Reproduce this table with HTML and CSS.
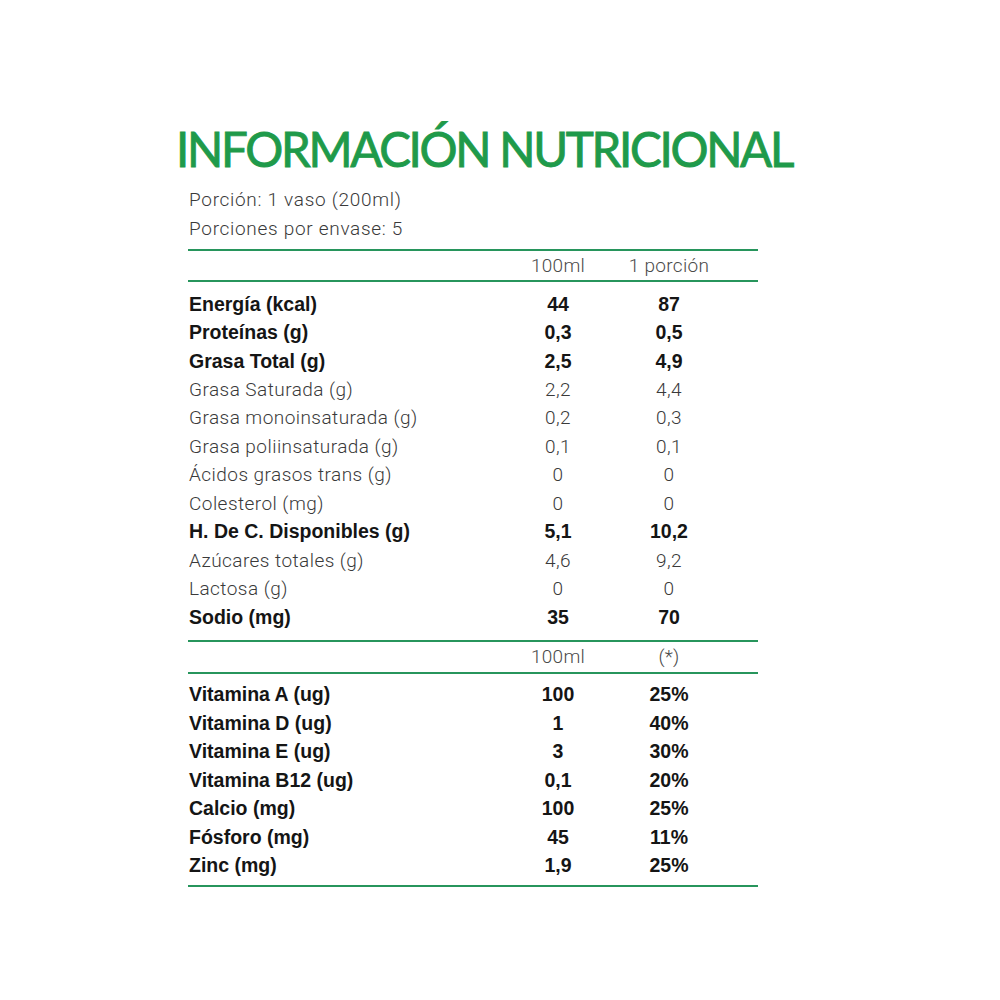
FILE: index.html
```html
<!DOCTYPE html>
<html lang="es">
<head>
<meta charset="utf-8">
<link rel="stylesheet" href="styles.css">
</head>
<body>
<main class="panel">
  <h1 class="title">INFORMACIÓN NUTRICIONAL</h1>
  <div class="meta">
    <p>Porción: 1 vaso (200ml)</p>
    <p>Porciones por envase: 5</p>
  </div>
  <div class="rule"></div>
  <div class="row head"><span></span><span class="v">100ml</span><span class="v">1 porción</span></div>
  <div class="rule"></div>
  <section class="block first">
    <div class="row b"><span>Energía (kcal)</span><span class="v">44</span><span class="v">87</span></div>
    <div class="row b"><span>Proteínas (g)</span><span class="v">0,3</span><span class="v">0,5</span></div>
    <div class="row b"><span>Grasa Total (g)</span><span class="v">2,5</span><span class="v">4,9</span></div>
    <div class="row"><span>Grasa Saturada (g)</span><span class="v">2,2</span><span class="v">4,4</span></div>
    <div class="row"><span>Grasa monoinsaturada (g)</span><span class="v">0,2</span><span class="v">0,3</span></div>
    <div class="row"><span>Grasa poliinsaturada (g)</span><span class="v">0,1</span><span class="v">0,1</span></div>
    <div class="row"><span>Ácidos grasos trans (g)</span><span class="v">0</span><span class="v">0</span></div>
    <div class="row"><span>Colesterol (mg)</span><span class="v">0</span><span class="v">0</span></div>
    <div class="row b"><span>H. De C. Disponibles (g)</span><span class="v">5,1</span><span class="v">10,2</span></div>
    <div class="row"><span>Azúcares totales (g)</span><span class="v">4,6</span><span class="v">9,2</span></div>
    <div class="row"><span>Lactosa (g)</span><span class="v">0</span><span class="v">0</span></div>
    <div class="row b"><span>Sodio (mg)</span><span class="v">35</span><span class="v">70</span></div>
  </section>
  <div class="rule"></div>
  <div class="row head head2"><span></span><span class="v">100ml</span><span class="v">(*)</span></div>
  <div class="rule"></div>
  <section class="block second">
    <div class="row b"><span>Vitamina A (ug)</span><span class="v">100</span><span class="v">25%</span></div>
    <div class="row b"><span>Vitamina D (ug)</span><span class="v">1</span><span class="v">40%</span></div>
    <div class="row b"><span>Vitamina E (ug)</span><span class="v">3</span><span class="v">30%</span></div>
    <div class="row b"><span>Vitamina B12 (ug)</span><span class="v">0,1</span><span class="v">20%</span></div>
    <div class="row b"><span>Calcio (mg)</span><span class="v">100</span><span class="v">25%</span></div>
    <div class="row b"><span>Fósforo (mg)</span><span class="v">45</span><span class="v">11%</span></div>
    <div class="row b"><span>Zinc (mg)</span><span class="v">1,9</span><span class="v">25%</span></div>
  </section>
  <div class="rule"></div>
</main>
</body>
</html>
```
FILE: styles.css
```css
html, body {
  margin: 0;
  padding: 0;
  background: #ffffff;
}
body {
  width: 1000px;
  height: 1000px;
}
.panel {
  width: 570px;
  margin-left: 188px;
  padding-top: 120px;
  font-family: Roboto, "Liberation Sans", sans-serif;
  color: #1b1b1b;
}
.title {
  margin: 0 0 0 -12px;
  font-family: Lato, "Noto Sans", sans-serif;
  font-weight: 400;
  font-size: 47.5px;
  line-height: 58px;
  color: #1f9a4a;
  white-space: nowrap;
  letter-spacing: -2.3px;
  -webkit-text-stroke: 0.9px #1f9a4a;
}
.meta {
  margin-top: 7px;
  padding-left: 1px;
}
.meta p {
  margin: 0;
  font-size: 19px;
  font-weight: 300;
  line-height: 29px;
  letter-spacing: 0.7px;
  color: #3a3a3a;
}
.rule {
  height: 2px;
  margin-top: 6px;
  background: #27955c;
}
.row {
  display: grid;
  grid-template-columns: 318px 102px 120px 30px;
  height: 28.45px;
  align-items: center;
  padding-left: 1px;
  font-size: 19px;
  font-weight: 300;
  letter-spacing: 0.45px;
  color: #3a3a3a;
}
.row .v {
  text-align: center;
}
.row.b {
  font-family: "Liberation Sans", Arial, sans-serif;
  font-size: 19.5px;
  font-weight: 700;
  letter-spacing: 0;
  color: #151515;
}
.row.head {
  height: 29px;
  color: #4a4a4a;
  letter-spacing: 0.3px;
}
.row.head2 {
  height: 30px;
}
.row.head + .rule {
  margin-top: 0;
}
.block + .rule {
  margin-top: 0;
}
.block.first {
  padding: 8px 0 8.6px;
}
.block.second {
  padding: 6.8px 0 5px;
}
```
